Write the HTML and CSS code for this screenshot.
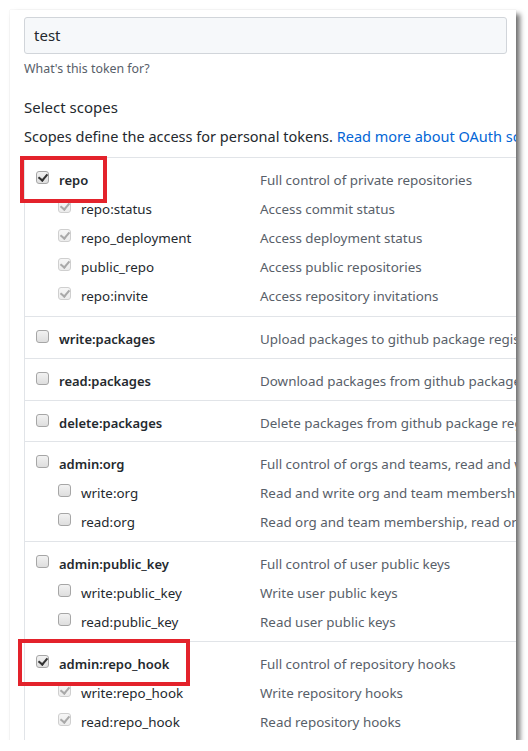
FILE: index.html
```html
<!DOCTYPE html>
<html>
<head>
<meta charset="utf-8">
<link rel="stylesheet" href="styles.css">
</head>
<body>
<div class="panel">
  <div class="token-input">test</div>
  <p class="note">What's this token for?</p>
  <h3 class="title">Select scopes</h3>
  <p class="lead">Scopes define the access for personal tokens. <a class="link" href="#">Read more about OAuth scopes.</a></p>

  <div class="scopes">
    <div class="group wide">
      <div class="row main"><span class="cell"><span class="cb on"></span><span class="name">repo</span></span><span class="desc">Full control of private repositories</span></div>
      <div class="row sub"><span class="cell"><span class="cb dis"></span><span class="name">repo:status</span></span><span class="desc">Access commit status</span></div>
      <div class="row sub"><span class="cell"><span class="cb dis"></span><span class="name">repo_deployment</span></span><span class="desc">Access deployment status</span></div>
      <div class="row sub"><span class="cell"><span class="cb dis"></span><span class="name">public_repo</span></span><span class="desc">Access public repositories</span></div>
      <div class="row sub"><span class="cell"><span class="cb dis"></span><span class="name">repo:invite</span></span><span class="desc">Access repository invitations</span></div>
    </div>
    <div class="group">
      <div class="row main"><span class="cell"><span class="cb"></span><span class="name">write:packages</span></span><span class="desc">Upload packages to github package registry</span></div>
    </div>
    <div class="group">
      <div class="row main"><span class="cell"><span class="cb"></span><span class="name">read:packages</span></span><span class="desc">Download packages from github package registry</span></div>
    </div>
    <div class="group">
      <div class="row main"><span class="cell"><span class="cb"></span><span class="name">delete:packages</span></span><span class="desc">Delete packages from github package registry</span></div>
    </div>
    <div class="group">
      <div class="row main"><span class="cell"><span class="cb"></span><span class="name">admin:org</span></span><span class="desc">Full control of orgs and teams, read and write org projects</span></div>
      <div class="row sub"><span class="cell"><span class="cb"></span><span class="name">write:org</span></span><span class="desc">Read and write org and team membership, read and write org projects</span></div>
      <div class="row sub"><span class="cell"><span class="cb"></span><span class="name">read:org</span></span><span class="desc">Read org and team membership, read org projects</span></div>
    </div>
    <div class="group">
      <div class="row main"><span class="cell"><span class="cb"></span><span class="name">admin:public_key</span></span><span class="desc">Full control of user public keys</span></div>
      <div class="row sub"><span class="cell"><span class="cb"></span><span class="name">write:public_key</span></span><span class="desc">Write user public keys</span></div>
      <div class="row sub"><span class="cell"><span class="cb"></span><span class="name">read:public_key</span></span><span class="desc">Read user public keys</span></div>
    </div>
    <div class="group">
      <div class="row main"><span class="cell"><span class="cb on"></span><span class="name">admin:repo_hook</span></span><span class="desc">Full control of repository hooks</span></div>
      <div class="row sub"><span class="cell"><span class="cb dis"></span><span class="name">write:repo_hook</span></span><span class="desc">Write repository hooks</span></div>
      <div class="row sub"><span class="cell"><span class="cb dis"></span><span class="name">read:repo_hook</span></span><span class="desc">Read repository hooks</span></div>
    </div>
  </div>

  <div class="mark mark-repo"></div>
  <div class="mark mark-hook"></div>
</div>
</body>
</html>
```

FILE: styles.css
```css
* { box-sizing: border-box; }
html, body { margin: 0; padding: 0; background: #fff; }
body {
  font-family: "Noto Sans", "Open Sans", sans-serif;
  color: #24292e;
  font-size: 14px;
}
.panel {
  position: relative;
  margin: 10px 0 0 10px;
  width: 506px;
  height: 730px;
  background: #fff;
  overflow: hidden;
  padding: 7px 0 0 14px;
  box-shadow: 0 0 1px rgba(0,0,0,0.15), 4px 4px 5px rgba(0,0,0,0.55);
}
.token-input {
  width: 483px;
  height: 37px;
  border: 1px solid #d1d5da;
  border-radius: 3px;
  background: #f6f8fa;
  padding: 0 9px;
  font-size: 15px;
  line-height: 35px;
  color: #24292e;
}
.note {
  margin: 6px 0 0;
  font-size: 12.4px;
  line-height: 18px;
  color: #586069;
}
.title {
  margin: 17px 0 0;
  font-size: 15px;
  font-weight: 400;
  line-height: 24px;
}
.lead {
  margin: 7px 0 0;
  font-size: 14.5px;
  line-height: 21px;
  white-space: nowrap;
}
.link { color: #0366d6; text-decoration: none; }
.scopes {
  margin-top: 10px;
  width: 700px;
  border-left: 1px solid #e1e4e8;
}
.group {
  border-top: 1px solid #e1e4e8;
  padding: 12px 0 7.8px;
}
.group.wide { padding-bottom: 9px; }
.row {
  display: grid;
  grid-template-columns: 235px 1fr;
  line-height: 21px;
  height: 21px;
  font-size: 13.4px;
}
.row.sub { margin-top: 8px; }
.cell {
  display: flex;
  align-items: flex-start;
  gap: 10px;
  padding-left: 11px;
}
.row.sub .cell { padding-left: 33px; }
.name { white-space: nowrap; }
.row.main .name { font-weight: 600; font-size: 13px; }
.desc { color: #586069; white-space: nowrap; }
.cb {
  position: relative;
  flex: none;
  width: 13px;
  height: 13px;
  margin-top: 1px;
  border: 1px solid #a6a6a6;
  border-radius: 3px;
  background: linear-gradient(#f2f2f2, #dedede);
}
.cb.on::after, .cb.dis::after {
  content: "";
  position: absolute;
  left: 3px;
  top: 0px;
  width: 4px;
  height: 7px;
  border: solid #333;
  border-width: 0 2px 2px 0;
  transform: rotate(40deg);
}
.cb.dis {
  border-color: #cfcfcf;
  background: linear-gradient(#f6f6f6, #ececec);
}
.cb.dis::after { border-color: #a9a9a9; }
.mark {
  position: absolute;
  border: 4px solid #e3222b;
}
.mark-repo { left: 10px; top: 146px; width: 87px; height: 47px; }
.mark-hook { left: 8px; top: 629px; width: 172px; height: 47px; }
```
